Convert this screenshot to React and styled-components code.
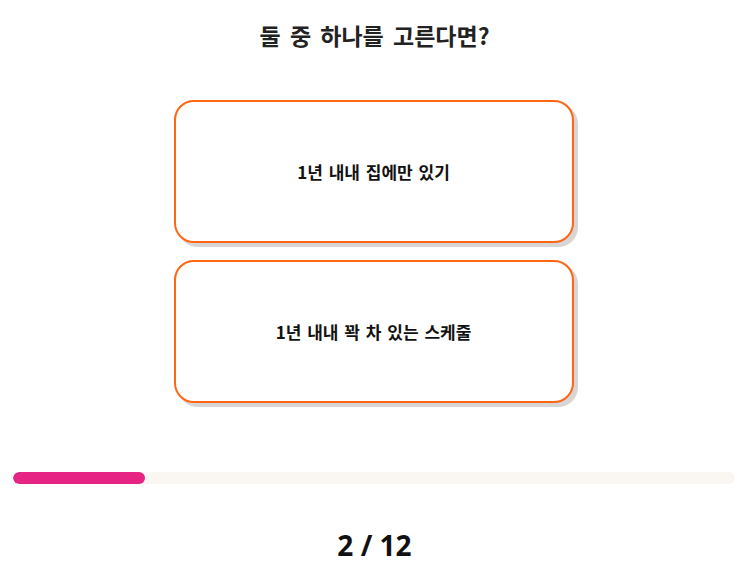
import React from "react";
import styled, { createGlobalStyle } from "styled-components";

const Global = createGlobalStyle`
  html, body { margin: 0; padding: 0; background: #fff; }
  body { font-family: "Noto Sans CJK KR", "Noto Sans", sans-serif; }
`;

const Page = styled.div`
  width: 749px;
  height: 575px;
  display: flex;
  flex-direction: column;
  align-items: center;
  box-sizing: border-box;
  padding-top: 17px;
`;

const Title = styled.h1`
  margin: 0;
  font-size: 23px;
  line-height: 36px;
  font-weight: 700;
  word-spacing: 4px;
  color: #222;
`;

const Choices = styled.div`
  display: flex;
  flex-direction: column;
  gap: 17px;
  margin-top: 47px;
  margin-right: 2px;
`;

const Choice = styled.button`
  width: 400px;
  height: 143px;
  box-sizing: border-box;
  border: 2px solid #ff6512;
  border-radius: 20px;
  background: #fff;
  box-shadow: 4px 4px 0 #d6d6d6;
  font-family: "Noto Sans CJK KR", "Noto Sans", sans-serif;
  font-size: 17px;
  font-weight: 700;
  word-spacing: 2px;
  color: #111;
  cursor: pointer;
  padding: 0;
`;

const Track = styled.div`
  align-self: stretch;
  margin: 69px 14px 0 13px;
  height: 12px;
  border-radius: 6px;
  background: #faf6f1;
  overflow: hidden;
`;

const Fill = styled.div`
  height: 100%;
  border-radius: 6px;
  background: #e62483;
`;

const Counter = styled.div`
  margin-top: 42px;
  font-family: "Noto Sans", sans-serif;
  font-size: 28px;
  line-height: 38px;
  font-weight: 700;
  color: #111;
`;

export default function App() {
  const current = 2;
  const total = 12;
  return (
    <Page>
      <Global />
      <Title>둘 중 하나를 고른다면?</Title>
      <Choices>
        <Choice>1년 내내 집에만 있기</Choice>
        <Choice>1년 내내 꽉 차 있는 스케줄</Choice>
      </Choices>
      <Track>
        <Fill style={{ width: `${(current / total) * 100 * 1.1}%` }} />
      </Track>
      <Counter>
        {current} / {total}
      </Counter>
    </Page>
  );
}
